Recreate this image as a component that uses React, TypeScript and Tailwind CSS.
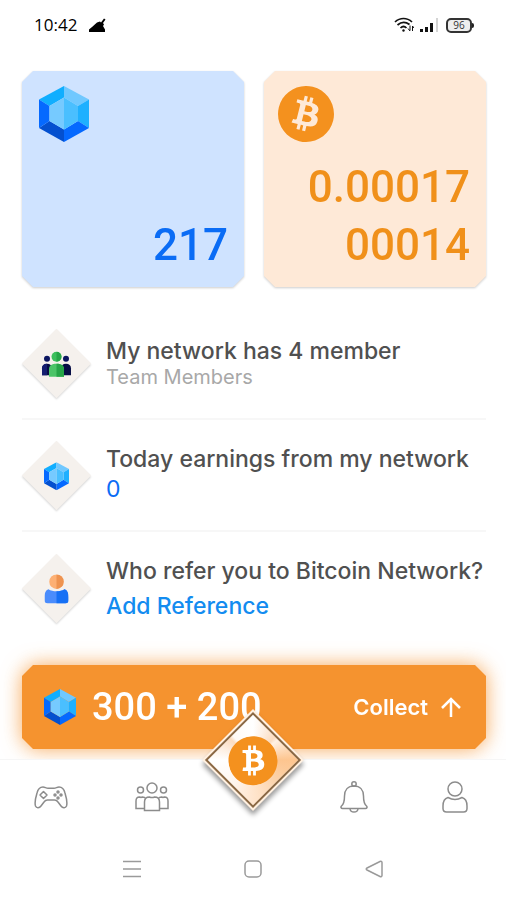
import type { ReactNode } from 'react'
import { SiBitcoin } from 'react-icons/si'

interface IconProps {
  className?: string
}

interface NetworkRowProps {
  title: string
  icon: ReactNode
  children: ReactNode
}

const cutCorners =
  '[clip-path:polygon(11px_0,calc(100%-11px)_0,100%_11px,100%_calc(100%-11px),calc(100%-11px)_100%,11px_100%,0_calc(100%-11px),0_11px)]'

const Gem = ({ className }: IconProps) => (
  <svg className={className} viewBox="0 0 50 56" aria-hidden="true">
    <path d="M25 0 0 13.5 10.5 20 25 11.5Z" fill="#10aeff" />
    <path d="M25 0 50 13.5 39 20 25 11.5Z" fill="#70c8ff" />
    <path d="M50 13.5V42L39 35V20Z" fill="#1fb0ff" />
    <path d="M50 42 25 56V43.5L39 35Z" fill="#0569ff" />
    <path d="M25 56 0 42 10.5 35 25 43.5Z" fill="#0450cf" />
    <path d="M0 42V13.5L10.5 20V35Z" fill="#0569ff" />
    <path d="M25 11.5 10.5 20V35L25 43.5Z" fill="#76caff" />
    <path d="M25 11.5 39 20V35L25 43.5Z" fill="#4abfff" />
  </svg>
)

const TeamIcon = ({ className }: IconProps) => (
  <svg className={className} viewBox="0 0 30 26" aria-hidden="true">
    <circle cx="5.5" cy="7.5" r="3" fill="#0b1560" />
    <path d="M.5 24v-7c0-3 2-4.5 5-4.5s5 1.5 5 4.5v7Z" fill="#060d45" />
    <path d="M.5 24v-7c0-3 2-4.5 5-4.5V24Z" fill="#141d70" />
    <circle cx="24.5" cy="7.5" r="3" fill="#0b1560" />
    <path d="M19.5 24v-7c0-3 2-4.5 5-4.5s5 1.5 5 4.5v7Z" fill="#060d45" />
    <circle cx="15" cy="5.5" r="5" fill="#3cbf5c" />
    <path d="M7.5 25.5V18c0-4 3-5.5 7.5-5.5s7.5 1.5 7.5 5.5v7.5Z" fill="#4cc468" />
    <path d="M15 .5a5 5 0 0 1 0 10ZM15 12.5c4.5 0 7.5 1.5 7.5 5.5v7.5H15Z" fill="#27a548" />
  </svg>
)

const PersonIcon = ({ className }: IconProps) => (
  <svg className={className} viewBox="0 0 24 30" aria-hidden="true">
    <path d="M4 15c2 1.5 5 2 8 2s6-.5 8-2c3 1 4 4 4 8v3c0 2-1 3-3 3H3c-2 0-3-1-3-3v-3c0-4 1-7 4-8Z" fill="#4a8cfc" />
    <path d="M12 17c3 0 6-.5 8-2 3 1 4 4 4 8v3c0 2-1 3-3 3h-9Z" fill="#1670f5" />
    <circle cx="12" cy="7.5" r="7.2" fill="#fdb074" />
    <path d="M12 .3a7.2 7.2 0 0 1 0 14.4Z" fill="#ee9350" />
  </svg>
)

const NetworkRow = ({ title, icon, children }: NetworkRowProps) => (
  <li className="flex h-28 items-center border-b-2 border-[#f7f7f7] last:border-b-0">
    <div className="mx-[10px] grid size-[49px] shrink-0 rotate-45 place-items-center bg-[#f5f1ed] shadow-[1px_1px_2px_rgba(0,0,0,0.15)]">
      <div className="-rotate-45">{icon}</div>
    </div>
    <div className="ml-[15px] whitespace-nowrap">
      <h2 className="text-[23px] leading-7 font-medium text-[#505050]">{title}</h2>
      {children}
    </div>
  </li>
)

const StatusBar = () => (
  <header className="flex h-[50px] items-center justify-between pr-8 pl-[34px] text-black">
    <div className="flex items-center gap-3">
      <span className="font-['Open_Sans',sans-serif] text-[17px] leading-6">10:42</span>
      <svg className="h-[14px] w-[17px]" viewBox="0 0 17 14" aria-hidden="true">
        <path d="M0 14V11.5L3 9 8 4.5 11 3.5 12 4.5 15 .5 16.5 1.5 14 5 15 6.5 14 8 16 11.5V14Z" />
      </svg>
    </div>
    <div className="flex items-center">
      <svg className="h-4 w-5" viewBox="0 0 20 16" fill="none" stroke="#111" strokeWidth="1.7" aria-hidden="true">
        <path d="M1 5C6 .3 13 .3 18 5M3.5 8C7.5 4.5 11.5 4.5 15.5 7.5M6.5 11C8.5 9 10.5 9 12.5 11" />
        <circle cx="9.5" cy="13.5" r="1.2" fill="#111" stroke="none" />
        <path d="M16 8.5v5m-2-2 2 2.5M18.5 14V9m0 0 1.5 2" strokeWidth="1" />
      </svg>
      <svg className="ml-[6px] h-4 w-[19px]" viewBox="0 0 19 16" aria-hidden="true">
        <path d="M0 12h3v3H0ZM5 10h3v5H5ZM10 6h3v9h-3Z" fill="#111" />
        <path d="M16 1h2v14h-2Z" fill="#d4d4d4" />
      </svg>
      <div className="ml-[7px] flex h-[15px] w-[26px] items-center justify-center rounded-[5px] border-2 border-[#333] bg-[#eee] font-['Open_Sans',sans-serif] text-[10px] leading-none text-[#333]">
        96
      </div>
      <div className="h-[5px] w-[2px] rounded-r-sm bg-[#222]" />
    </div>
  </header>
)

const BottomNav = () => (
  <nav className="relative grid h-20 grid-cols-5 place-items-center border-t border-[#f6f6f6] bg-white pb-[6px] text-[#8c8c8c]">
    <button type="button" aria-label="Games">
      <svg className="h-6 w-[34px]" viewBox="0 0 34 24" fill="none" stroke="currentColor" strokeWidth="1.5" aria-hidden="true">
        <path d="M9 2C5.5 2 4 4 3 8 1.5 13 .5 18 1.5 21c1 2.5 4 2 5.5 0l3-4c1-1.5 2-2 3.5-2h7c1.5 0 2.5.5 3.5 2l3 4c1.5 2 4.5 2.5 5.5 0 1-3 0-8-1.5-13-1-4-2.5-6-6-6-2 0-3 1.2-5 1.2h-6C12 3.2 11 2 9 2Z" />
        <path d="M9.5 6.5 13 10l-3.5 3.5L6 10Z" strokeLinejoin="round" />
        <circle cx="24" cy="7" r="1" />
        <circle cx="24" cy="13" r="1" />
        <circle cx="21" cy="10" r="1" />
        <circle cx="27" cy="10" r="1" />
      </svg>
    </button>
    <button type="button" aria-label="Team">
      <svg className="h-[30px] w-[34px]" viewBox="0 0 34 30" fill="none" stroke="currentColor" strokeWidth="1.5" aria-hidden="true">
        <circle cx="17" cy="6" r="5" />
        <circle cx="5.5" cy="8" r="3" />
        <circle cx="28.5" cy="8" r="3" />
        <path d="M9.5 28.5V20c0-3 2-5 5-5 1.5.7 3.5.7 5 0 3 0 5 2 5 5v8.5ZM9.5 26.5H1V19c0-2.5 1.5-4 3.5-4 1 .5 2 .5 3 0 1.5 0 2.5.5 3.2 1.5M24.5 26.5H33V19c0-2.5-1.5-4-3.5-4-1 .5-2 .5-3 0-1.5 0-2.5.5-3.2 1.5" />
      </svg>
    </button>
    <span />
    <button type="button" aria-label="Notifications">
      <svg className="h-8 w-7" viewBox="0 0 28 32" fill="none" stroke="currentColor" strokeWidth="1.5" aria-hidden="true">
        <circle cx="14" cy="3" r="2.2" />
        <path d="M14 5c-6 0-9.5 4-9.5 10 0 6-.5 8-3 10-1 1-.5 2.500 1 2.500h23c1.500 0 2-1.500 1-2.500-2.500-2-3-4-3-10 0-6-3.500-10-9.500-10ZM10 28c.5 4 7.500 4 8 0" />
      </svg>
    </button>
    <button type="button" aria-label="Profile">
      <svg className="h-8 w-[26px]" viewBox="0 0 26 32" fill="none" stroke="currentColor" strokeWidth="1.5" aria-hidden="true">
        <circle cx="13" cy="8" r="7" />
        <path d="M6 16.5c4.5 2.5 9.5 2.5 14 0 3.5 1 5 4 5 8.5v2.5c0 2-1.5 3.5-3.5 3.5h-17C2.5 31 1 29.5 1 27.5V25c0-4.5 1.5-7.5 5-8.5Z" />
      </svg>
    </button>

    {/* mining button, hangs over the collect bar */}
    <button
      type="button"
      aria-label="Bitcoin"
      className="absolute top-0 left-1/2 grid size-[72px] -translate-x-1/2 -translate-y-1/2 rotate-45 place-items-center bg-[#fff0e0] shadow-[3px_3px_5px_rgba(0,0,0,0.4)]"
    >
      <span className="grid size-[68px] place-items-center border-2 border-[#8a6844] bg-[conic-gradient(from_45deg,#fdc58f,#fbd3ab_12%,#ffe4cb_24%,#fff6ee_36%,#ffffff_50%,#fbdcc0_62%,#fffaf5_64%,#ffffff_75%,#fbdcc0_87%,#fff1e4_89%,#fdc58f)]">
        <span className="-rotate-45">
          <span className="block rounded-full bg-[radial-gradient(#fff_60%,transparent_62%)]">
            <SiBitcoin className="size-[49px] -rotate-[14deg] text-[#f4911e]" />
          </span>
        </span>
      </span>
    </button>
  </nav>
)

const SystemBar = () => (
  <div className="grid h-[60px] grid-cols-3 place-items-center px-[72px] text-[#9a9a9a]">
    <button type="button" aria-label="Recent apps">
      <svg className="size-[18px]" viewBox="0 0 18 18" fill="none" stroke="currentColor" strokeWidth="1.5" aria-hidden="true">
        <path d="M0 1.5h18M0 9h18M0 16.5h18" />
      </svg>
    </button>
    <button type="button" aria-label="Home">
      <svg className="size-[18px]" viewBox="0 0 18 18" fill="none" stroke="currentColor" strokeWidth="1.5" aria-hidden="true">
        <rect x="1" y="1" width="16" height="16" rx="4" />
      </svg>
    </button>
    <button type="button" aria-label="Back">
      <svg className="size-[18px]" viewBox="0 0 18 18" fill="none" stroke="currentColor" strokeWidth="1.5" strokeLinejoin="round" aria-hidden="true">
        <path d="M2 8 15 1.5C16 1 17 1.5 17 2.5v13c0 1-1 1.5-2 1L2 10C1 9.5 1 8.5 2 8Z" />
      </svg>
    </button>
  </div>
)

export default function App() {
  return (
    <div className="overflow-hidden bg-white font-['Inter',sans-serif]">
      <StatusBar />

      <main className="pt-[21px] pr-5 pl-[22px]">
        {/* balances */}
        <section className="grid grid-cols-2 gap-5 font-['Roboto',sans-serif] text-[44px] leading-[58px] font-medium">
          <div className="drop-shadow-[0_1px_1px_rgba(0,0,0,0.2)]">
            <div className={`flex h-[216px] flex-col justify-between bg-[#cfe3ff] px-4 pt-[15px] pb-[13px] ${cutCorners}`}>
              <Gem className="h-14 w-[52px]" />
              <p className="text-right text-[#0a6cf5]">217</p>
            </div>
          </div>
          <div className="drop-shadow-[0_1px_1px_rgba(0,0,0,0.2)]">
            <div className={`flex h-[216px] flex-col justify-between bg-[#fee9d7] px-4 pt-[15px] pb-[13px] ${cutCorners}`}>
              <SiBitcoin className="-ml-[2px] size-14 text-[#f4911e]" />
              <p className="text-right text-[#f0901a]">
                0.00017
                <br />
                00014
              </p>
            </div>
          </div>
        </section>

        <ul className="mt-[21px]">
          <NetworkRow title="My network has 4 member" icon={<TeamIcon className="h-[26px] w-[30px]" />}>
            <p className="text-[20px] leading-6 text-[#a8a8a8]">Team Members</p>
          </NetworkRow>
          <NetworkRow title="Today earnings from my network" icon={<Gem className="h-7 w-[26px]" />}>
            <p className="text-[23px] leading-8 text-[#0a6cf5]">0</p>
          </NetworkRow>
          <NetworkRow title="Who refer you to Bitcoin Network?" icon={<PersonIcon className="h-[30px] w-6" />}>
            <a href="#reference" className="mt-[7px] block text-[23px] leading-7 font-medium text-[#138cf0]">
              Add Reference
            </a>
          </NetworkRow>
        </ul>

        <div className="mt-[21px] mb-[10px] drop-shadow-[0_0_10px_rgba(245,147,49,0.8)]">
          <button
            type="button"
            className={`flex h-[84px] w-full items-center bg-[#f5932f] pr-6 pl-[22px] text-white ${cutCorners}`}
          >
            <Gem className="h-9 w-8" />
            <span className="ml-4 font-['Roboto',sans-serif] text-[38px] leading-none font-medium">300 + 200</span>
            <span className="ml-auto text-[22px] leading-7 font-semibold">Collect</span>
            <svg className="ml-3 h-5 w-[22px]" viewBox="0 0 22 20" fill="none" stroke="currentColor" strokeWidth="2.5" aria-hidden="true">
              <path d="M11 20V2M2 11l9-9 9 9" />
            </svg>
          </button>
        </div>
      </main>

      <BottomNav />
      <SystemBar />
    </div>
  )
}
